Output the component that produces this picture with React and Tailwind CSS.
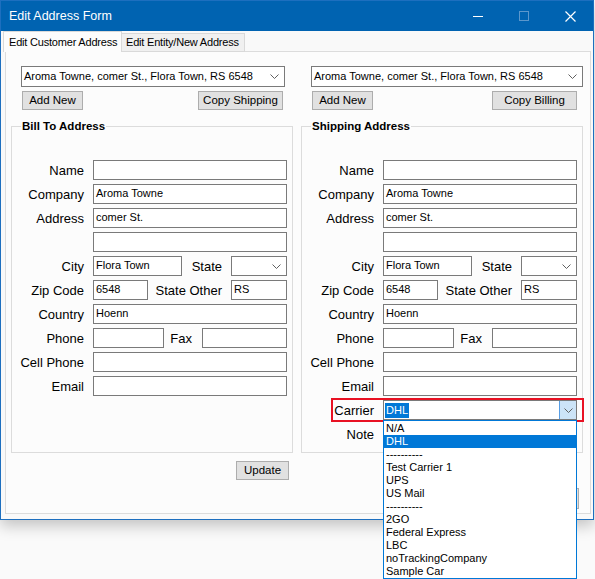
import React from 'react';

const carriers = ['N/A', 'DHL', '----------', 'Test Carrier 1', 'UPS', 'US Mail', '----------', '2GO', 'Federal Express', 'LBC', 'noTrackingCompany', 'Sample Car'];

function Chevron() {
  return (
    <svg width="9" height="5" viewBox="0 0 9 5" className="shrink-0">
      <polyline points="0.5,0.5 4.5,4.5 8.5,0.5" fill="none" stroke="#606060" strokeWidth="1" />
    </svg>
  );
}

function Field({ className = '', value = '' }) {
  return (
    <div className={`h-[20px] shrink-0 overflow-hidden whitespace-nowrap border border-[#7a7a7a] bg-white pl-[2px] text-[11px] leading-[17px] text-black ${className}`}>
      {value}
    </div>
  );
}

function Combo({ className = '', value = '', h = 'h-[20px]' }) {
  return (
    <div className={`flex shrink-0 items-center justify-between border border-[#7a7a7a] bg-white pl-[2px] pr-[5px] text-[11px] text-black ${h} ${className}`}>
      <span className="whitespace-nowrap">{value}</span>
      <Chevron />
    </div>
  );
}

function Label({ className = '', children }) {
  return <div className={`shrink-0 pt-[2px] text-right text-[13px] leading-[20px] text-black ${className}`}>{children}</div>;
}

function Button({ className = '', children }) {
  return (
    <div className={`flex h-[19px] shrink-0 items-center justify-center border border-[#adadad] bg-[#e1e1e1] text-[11.5px] text-black ${className}`}>
      {children}
    </div>
  );
}

function Row({ label, children }) {
  return (
    <div className="flex h-[20px] items-center">
      <Label className="w-[72px]">{label}</Label>
      <div className="ml-[9px] flex items-center">{children}</div>
    </div>
  );
}

function AddressGroup({ title, shipping }) {
  return (
    <div className="mt-[16px] h-[327px] w-[282px] border border-[#dcdcdc]">
      <div className="-mt-[8px] ml-[9px] w-fit bg-[#fcfcfc] px-[1px] text-[11.5px] font-bold leading-[14px] text-black">{title}</div>
      <div className="mt-[27px] flex flex-col gap-[4px]">
        <Row label="Name"><Field className="w-[194px]" /></Row>
        <Row label="Company"><Field className="w-[194px]" value="Aroma Towne" /></Row>
        <Row label="Address"><Field className="w-[194px]" value="comer St." /></Row>
        <Row label=""><Field className="w-[194px]" /></Row>
        <Row label="City">
          <Field className="w-[89px]" value="Flora Town" />
          <Label className="w-[40px]">State</Label>
          <Combo className="ml-[9px] w-[56px]" />
        </Row>
        <Row label="Zip Code">
          <Field className="w-[55px]" value="6548" />
          <Label className="w-[74px]">State Other</Label>
          <Field className="ml-[9px] w-[56px]" value="RS" />
        </Row>
        <Row label="Country"><Field className="w-[194px]" value="Hoenn" /></Row>
        <Row label="Phone">
          <Field className="w-[71px]" />
          <Label className="w-[28px]">Fax</Label>
          <Field className="ml-[10px] w-[85px]" />
        </Row>
        <Row label="Cell Phone"><Field className="w-[194px]" /></Row>
        <Row label="Email"><Field className="w-[194px]" /></Row>
        {shipping && (
          <>
            <div className="relative flex h-[20px] items-center">
              <div className="absolute -top-[2px] left-[29px] h-[24px] w-[253px] border-2 border-[#e81123]" />
              <Label className="w-[72px]">Carrier</Label>
              <div className="relative ml-[9px] flex h-[20px] w-[194px] items-center border border-[#7a7a7a] bg-white">
                <span className="ml-[1px] bg-[#0078d7] px-[1px] text-[11px] leading-[15px] text-white">DHL</span>
                <div className="ml-auto flex h-full w-[17px] items-center justify-center border-l border-[#569de5] bg-[#cce4f7]">
                  <Chevron />
                </div>
                <div className="absolute -left-px top-[19px] z-20 h-[159px] w-[194px] border border-[#0078d7] bg-white pt-[1px]">
                  {carriers.map((c, i) => (
                    <div
                      key={i}
                      className={`h-[13px] whitespace-nowrap pl-[2px] text-[11px] leading-[13px] ${c === 'DHL' ? 'bg-[#0078d7] text-white' : 'text-black'}`}
                    >
                      {c}
                    </div>
                  ))}
                </div>
              </div>
            </div>
            <Row label="Note"><Field className="w-[194px]" /></Row>
          </>
        )}
      </div>
    </div>
  );
}

export default function App() {
  return (
    <div className="relative h-[579px] w-[595px] overflow-hidden bg-[#fafafa] font-['Liberation_Sans',Arial,sans-serif]">
      <div className="h-[520px] w-[594px] border border-[#1d6fbf] bg-[#f9f9f9] shadow-[0_6px_14px_rgba(0,0,0,0.22)]">
        {/* title bar */}
        <div className="flex h-[30px] items-center bg-[#0063b1] text-white">
          <div className="pl-[8px] text-[12.5px]">Edit Address Form</div>
          <div className="ml-auto flex h-full">
            <div className="flex w-[46px] items-center justify-center">
              <div className="h-px w-[10px] bg-white" />
            </div>
            <div className="flex w-[46px] items-center justify-center">
              <div className="h-[10px] w-[10px] border border-[#5b97cc]" />
            </div>
            <div className="flex w-[46px] items-center justify-center">
              <svg width="11" height="11" viewBox="0 0 11 11">
                <path d="M0.5 0.5 L10.5 10.5 M10.5 0.5 L0.5 10.5" stroke="#fff" strokeWidth="1.2" />
              </svg>
            </div>
          </div>
        </div>

        {/* tabs */}
        <div className="relative z-10 -mb-px flex h-[21px] items-end pl-[2px]">
          <div className="flex h-[21px] w-[119px] items-center border border-b-0 border-[#d9d9d9] bg-[#fcfcfc] pl-[5px] text-[11px] tracking-[-0.2px] text-black">
            Edit Customer Address
          </div>
          <div className="flex h-[19px] w-[123px] items-center border border-l-0 border-[#d9d9d9] bg-[#f0f0f0] pl-[4px] text-[11px] tracking-[-0.2px] text-black">
            Edit Entity/New Address
          </div>
        </div>

        {/* tab page */}
        <div className="ml-[4px] h-[463px] w-[586px] border border-[#dcdcdc] bg-[#fcfcfc] pl-[5px] pt-[14px]">
          <div className="flex gap-[8px]">
            <div className="w-[282px]">
              <Combo className="ml-[10px] w-[264px]" h="h-[21px]" value="Aroma Towne, comer St., Flora Town, RS 6548" />
              <div className="mt-[4px] flex justify-between pl-[11px] pr-[10px]">
                <Button className="w-[61px]">Add New</Button>
                <Button className="w-[85px]">Copy Shipping</Button>
              </div>
              <AddressGroup title="Bill To Address" />
              <div className="mt-[8px] flex justify-end pr-[4px]">
                <Button className="w-[53px]">Update</Button>
              </div>
            </div>
            <div className="w-[282px]">
              <Combo className="ml-[10px] w-[272px]" h="h-[21px]" value="Aroma Towne, comer St., Flora Town, RS 6548" />
              <div className="mt-[4px] flex justify-between pl-[11px] pr-[6px]">
                <Button className="w-[61px]">Add New</Button>
                <Button className="w-[85px]">Copy Billing</Button>
              </div>
              <AddressGroup title="Shipping Address" shipping />
              <div className="mt-[35px] flex justify-end pr-[4px]">
                <Button className="h-[21px] w-[53px]">Cancel</Button>
              </div>
            </div>
          </div>
        </div>
      </div>
    </div>
  );
}
